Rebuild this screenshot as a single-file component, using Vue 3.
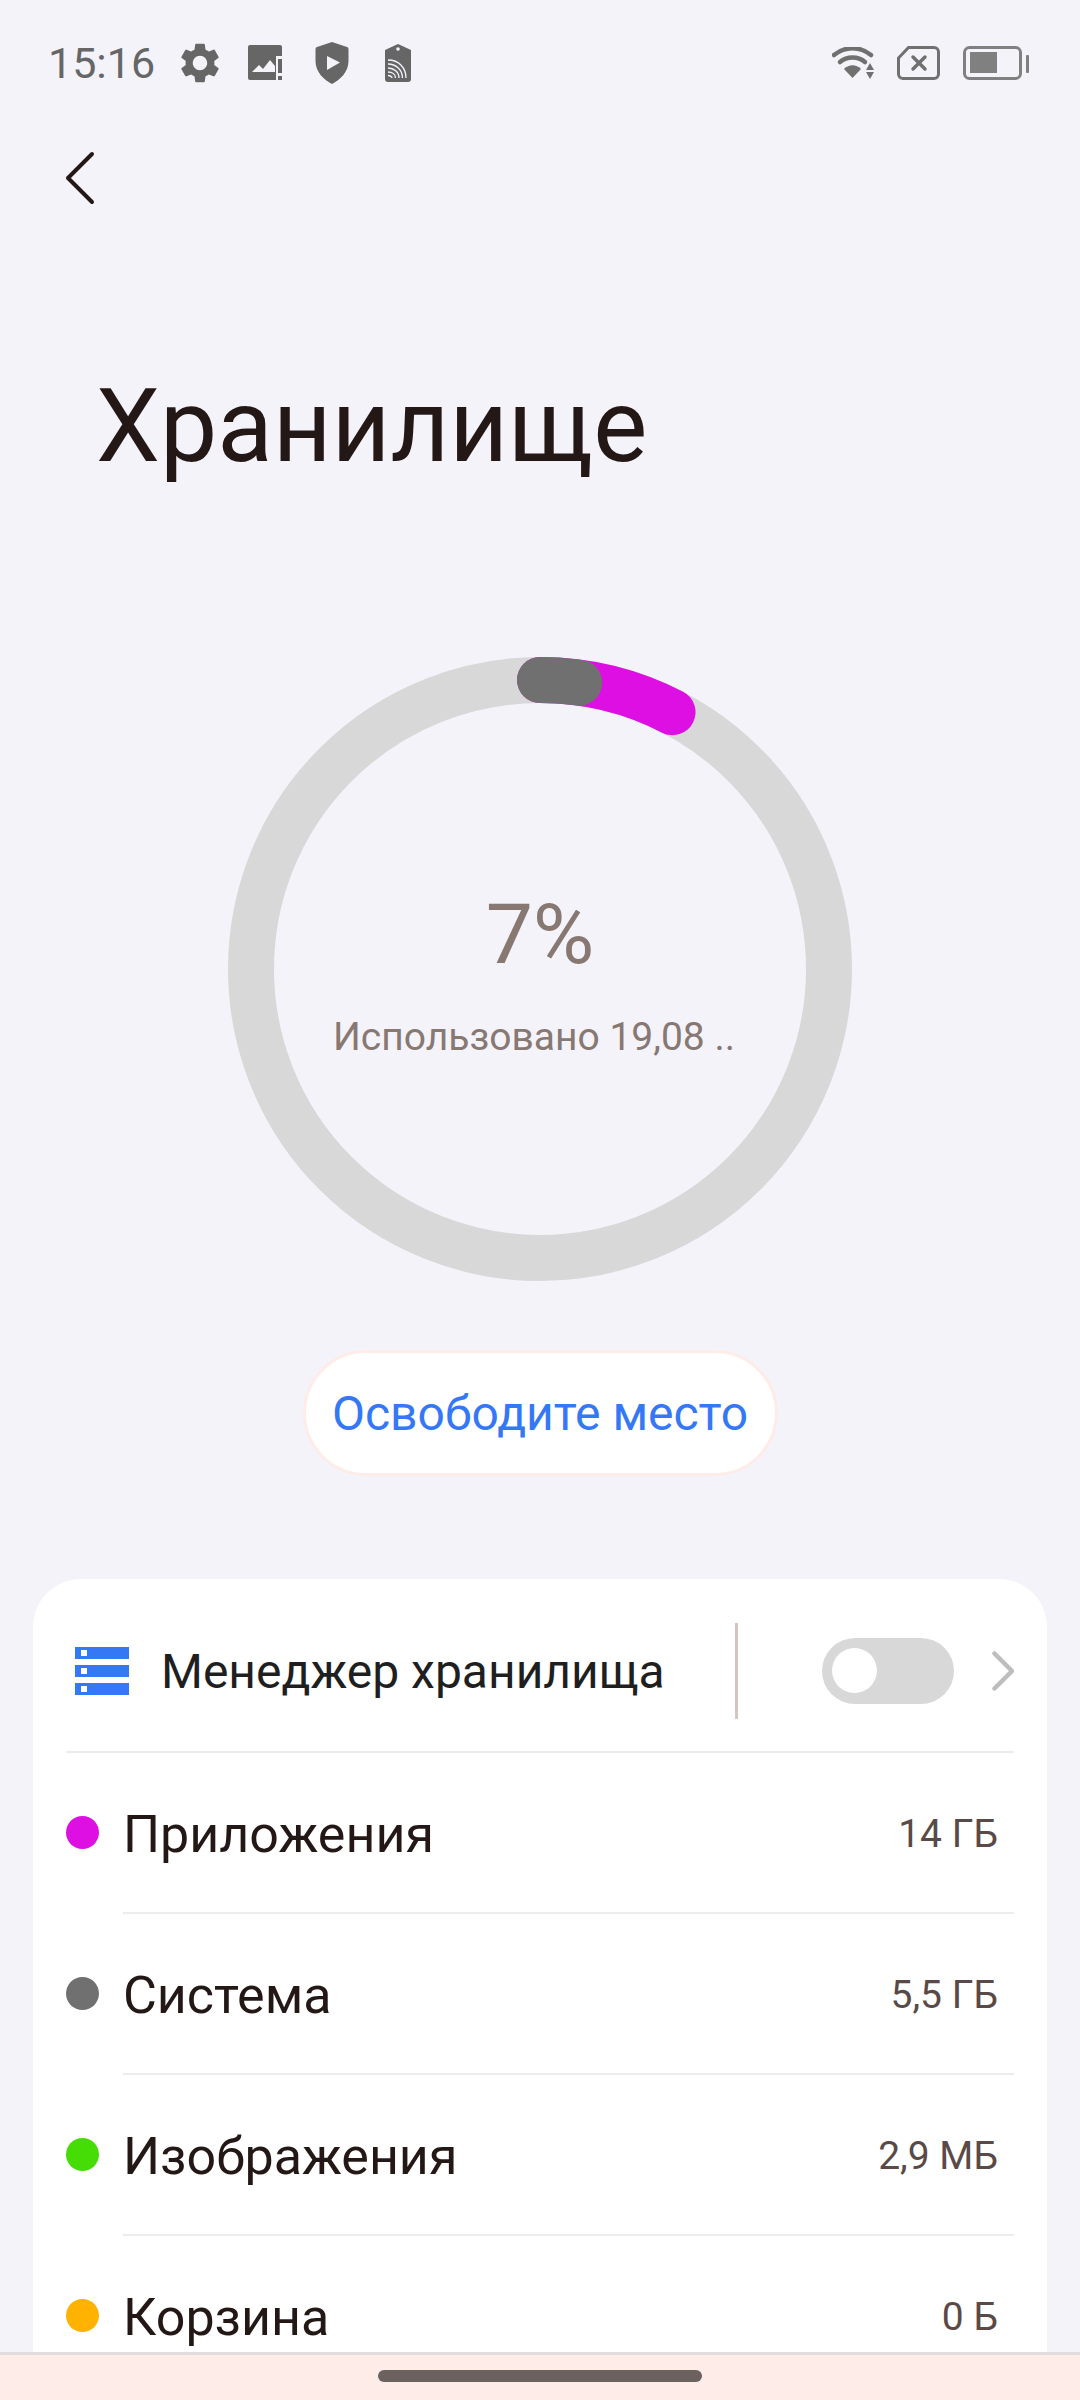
<script setup>
const rows = [
  { label: 'Приложения', value: '14 ГБ', color: '#dd0fe2' },
  { label: 'Система', value: '5,5 ГБ', color: '#707070' },
  { label: 'Изображения', value: '2,9 МБ', color: '#46dc06' },
  { label: 'Корзина', value: '0 Б', color: '#ffb300' }
]
const cx = 312
const cy = 312
const r = 289
function arc(deg) {
  const a = (deg * Math.PI) / 180
  const x = cx + r * Math.sin(a)
  const y = cy - r * Math.cos(a)
  return `M${cx} ${cy - r}A${r} ${r} 0 0 1 ${x.toFixed(2)} ${y.toFixed(2)}`
}
const magenta = arc(27.3)
const gray = arc(7.8)
</script>

<template>
  <div class="page">
    <header class="status">
      <span class="time">15:16</span>
      <div class="left-icons">
        <span class="slot">
          <svg width="48" height="48" viewBox="0 0 24 24" fill="#666"><path fill-rule="evenodd" d="M19.14 12.94c.04-.3.06-.61.06-.94 0-.32-.02-.64-.07-.94l2.03-1.58c.18-.14.23-.41.12-.61l-1.92-3.32c-.12-.22-.37-.29-.59-.22l-2.39.96c-.5-.38-1.03-.7-1.62-.94l-.36-2.54c-.04-.24-.24-.41-.48-.41h-3.84c-.24 0-.43.17-.47.41l-.36 2.54c-.59.24-1.13.57-1.62.94l-2.39-.96c-.22-.08-.47 0-.59.22L2.74 8.87c-.12.21-.08.47.12.61l2.03 1.58c-.05.3-.09.63-.09.94s.02.64.07.94l-2.03 1.58c-.18.14-.23.41-.12.61l1.92 3.32c.12.22.37.29.59.22l2.39-.96c.5.38 1.03.7 1.62.94l.36 2.54c.05.24.24.41.48.41h3.84c.24 0 .44-.17.47-.41l.36-2.54c.59-.24 1.13-.56 1.62-.94l2.39.96c.22.08.47 0 .59-.22l1.92-3.32c.12-.22.07-.47-.12-.61l-2.01-1.58zM12 15.6c-1.98 0-3.6-1.62-3.6-3.6s1.62-3.6 3.6-3.6 3.6 1.62 3.6 3.6-1.62 3.6-3.6 3.6z"/></svg>
        </span>
        <span class="slot">
          <svg width="36" height="36" viewBox="0 0 36 36" fill="#666">
            <path d="M2 0H32a2 2 0 0 1 2 2V11H28V35H2a2 2 0 0 1-2-2V2A2 2 0 0 1 2 0Z"/>
            <path d="M4 27 11 20 15 24 22 15 27 21V27Z" fill="#f4f3fa"/>
            <rect x="30" y="14" width="4" height="14"/>
            <rect x="30" y="31" width="4" height="4"/>
          </svg>
        </span>
        <span class="slot">
          <svg width="34" height="42" viewBox="0 0 34 42" fill="#666">
            <path fill-rule="evenodd" d="M17 0 32 5a2 2 0 0 1 1.500 2V19C33.500 30 25 38 17 42 9 38 .5 30 .5 19V7A2 2 0 0 1 2 5ZM12 14V28L25 20.500Z"/>
          </svg>
        </span>
        <span class="slot">
          <svg width="26" height="38" viewBox="0 0 26 38" fill="#666">
            <path d="M13 0 26 6V35a3 3 0 0 1-3 3H3a3 3 0 0 1-3-3V6Z"/>
            <circle cx="13" cy="5" r="1.800" fill="#f4f3fa"/>
            <g fill="none" stroke="#f4f3fa" stroke-width="1.300">
              <path d="M3 16C14 16 21 24 21 34"/>
              <path d="M3 20C11 20 17.500 26 17.500 34"/>
              <path d="M3 24C9 24 14 28 14 34"/>
              <path d="M3 28C7 28 10.500 30 10.500 34"/>
              <path d="M3 31.500C5.500 31.500 7 33 7 34"/>
            </g>
          </svg>
        </span>
      </div>
      <div class="right-icons">
        <svg width="42" height="32" viewBox="0 0 42 32">
          <g fill="none" stroke="#707070" stroke-width="4.500" stroke-linecap="round">
            <path d="M2 8C13-1 28-1 39 8"/>
            <path d="M8 15C15 9 26 9 33 15"/>
          </g>
          <path d="M12 22C17 17 24 17 29 22L20.500 31Z" fill="#707070"/>
          <path d="M38 16 42 23H34ZM34 25H42L38 32Z" fill="#707070"/>
        </svg>
        <svg width="43" height="34" viewBox="0 0 43 34">
          <path d="M11.500 1.500H37a4.500 4.500 0 0 1 4.500 4.500V28a4.500 4.500 0 0 1-4.500 4.500H6A4.500 4.500 0 0 1 1.500 28V12Z" fill="none" stroke="#707070" stroke-width="3"/>
          <path d="M16 11 28 23M28 11 16 23" stroke="#707070" stroke-width="3.500" stroke-linecap="round"/>
        </svg>
        <svg width="66" height="34" viewBox="0 0 66 34">
          <rect x="1.500" y="1.500" width="56" height="31" rx="5" fill="none" stroke="#808080" stroke-width="3"/>
          <rect x="7" y="6" width="27" height="21" fill="#808080"/>
          <rect x="63" y="9" width="3" height="18" rx="1" fill="#808080"/>
        </svg>
      </div>
    </header>

    <div class="nav">
      <svg width="30" height="54" viewBox="0 0 30 54">
        <path d="M27 3 3 27 27 51" fill="none" stroke="#231815" stroke-width="4" stroke-linecap="round" stroke-linejoin="round"/>
      </svg>
    </div>

    <h1 class="title">Хранилище</h1>

    <section class="ring-wrap">
      <svg class="ring" width="624" height="624" viewBox="0 0 624 624">
        <circle :cx="cx" :cy="cy" :r="r" fill="none" stroke="#d8d8d8" stroke-width="46"/>
        <path :d="magenta" fill="none" stroke="#dd0fe2" stroke-width="46" stroke-linecap="round"/>
        <path :d="gray" fill="none" stroke="#707070" stroke-width="46" stroke-linecap="round"/>
      </svg>
      <div class="ring-text">
        <div class="percent">7%</div>
        <div class="used">Использовано 19,08 ..</div>
      </div>
    </section>

    <div class="action">
      <button class="free">Освободите место</button>
    </div>

    <section class="card">
      <div class="manager">
        <svg width="54" height="48" viewBox="0 0 54 48">
          <g v-for="y in [0, 18, 36]" :key="y">
            <rect x="0" :y="y" width="54" height="12" fill="#3478f6"/>
            <rect x="6" :y="y + 3" width="6" height="6" fill="#fff"/>
          </g>
        </svg>
        <span class="manager-label">Менеджер хранилища</span>
        <span class="sep"></span>
        <span class="switch"><span class="thumb"></span></span>
        <svg class="chev" width="22" height="40" viewBox="0 0 22 40">
          <path d="M2.500 2.500 20 20 2.500 37.500" fill="none" stroke="#bdbdbd" stroke-width="4.500" stroke-linecap="round" stroke-linejoin="round"/>
        </svg>
      </div>
      <div v-for="row in rows" :key="row.label" class="row">
        <span class="dot" :style="{ background: row.color }"></span>
        <div class="row-body">
          <span class="row-label">{{ row.label }}</span>
          <span class="row-value">{{ row.value }}</span>
        </div>
      </div>
    </section>

    <footer class="navbar"><span class="handle"></span></footer>
  </div>
</template>

<style>
html, body { margin: 0; background: #f4f3fa; }
</style>

<style scoped>
.page {
  position: relative;
  width: 1080px;
  height: 2400px;
  overflow: hidden;
  background: #f4f3fa;
  font-family: Roboto, "Noto Sans", sans-serif;
}
.status {
  display: flex;
  align-items: center;
  height: 126px;
  padding: 0 51px 0 48px;
  box-sizing: border-box;
}
.time { font-size: 43px; color: #666; width: 105px; line-height: 50px; }
.left-icons { display: flex; margin-left: 14px; }
.slot { width: 66px; height: 48px; display: flex; align-items: center; justify-content: center; }
.right-icons { display: flex; align-items: center; gap: 23px; margin-left: auto; }
.nav { padding-left: 65px; display: flex; align-items: flex-start; padding-top: 25px; box-sizing: border-box; height: 242px; }
.title {
  margin: 0;
  padding-left: 96px;
  font-size: 102px;
  font-weight: 400;
  line-height: 116px;
  color: #231815;
}
.ring-wrap {
  display: grid;
  justify-items: center;
  align-items: center;
  margin-top: 173px;
}
.ring, .ring-text { grid-area: 1 / 1; }
.ring-text { text-align: center; padding-top: 8px; }
.percent { font-size: 84px; line-height: 100px; color: #877872; font-weight: 400; margin-bottom: 28px; }
.used { font-size: 39px; line-height: 48px; color: #877872; margin-right: 12px; }
.action { display: flex; justify-content: center; margin-top: 69px; }
.free {
  width: 475px;
  height: 126px;
  border: 3px solid #feece9;
  border-radius: 63px;
  background: #fff;
  color: #3478f6;
  font: 400 48px Roboto, sans-serif;
  padding: 0;
}
.card {
  margin: 103px 33px 0;
  background: #fff;
  border-radius: 48px 48px 0 0;
}
.manager {
  height: 174px;
  margin: 0 33px;
  border-bottom: 2px solid #ececec;
  box-sizing: border-box;
  display: flex;
  align-items: center;
  padding-left: 9px;
  padding-top: 11px;
}
.manager-label { margin-left: 32px; margin-top: 2px; font-size: 48px; color: #1f1f1f; flex: 1; }
.sep { width: 3px; height: 96px; background: #d4c5c2; }
.switch {
  width: 132px;
  height: 66px;
  border-radius: 33px;
  background: #d8d8d8;
  margin-left: 84px;
  display: flex;
  align-items: center;
  padding-left: 10px;
  box-sizing: border-box;
}
.thumb { width: 45px; height: 45px; border-radius: 50%; background: #fff; }
.chev { margin-left: 38px; }
.row { display: flex; align-items: center; height: 161px; padding-left: 33px; }
.dot { width: 33px; height: 33px; border-radius: 50%; flex: none; margin-bottom: 3px; }
.row-body {
  flex: 1;
  height: 100%;
  margin: 0 33px 0 24px;
  padding-right: 16px;
  padding-top: 3px;
  display: flex;
  align-items: center;
  justify-content: space-between;
  border-bottom: 2px solid #ececec;
  box-sizing: border-box;
}
.row-label { font-size: 52px; color: #231815; }
.row-value { font-size: 39px; color: #5a4a47; }
.navbar {
  position: absolute;
  left: 0;
  right: 0;
  bottom: 0;
  height: 48px;
  background: #feece9;
  border-top: 3px solid #e0dcdc;
  display: flex;
  justify-content: center;
  padding-top: 15px;
  box-sizing: border-box;
}
.handle { width: 324px; height: 12px; border-radius: 6px; background: #6b6260; }
</style>
